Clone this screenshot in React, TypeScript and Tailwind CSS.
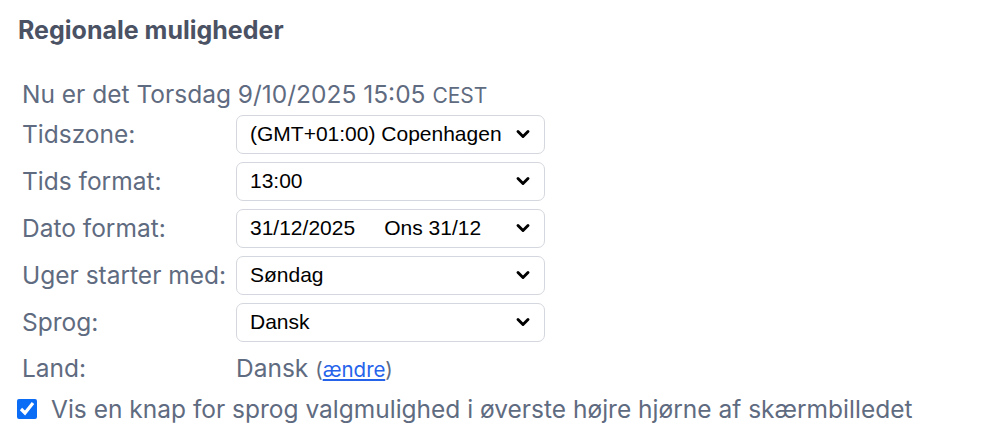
import { ChevronDown } from "lucide-react";

const labelCls = "w-[214px] shrink-0 text-[24.5px] leading-none text-[#5f6b80]";

function Select({ value }: { value: string }) {
  return (
    <div className="relative h-[39px] w-[309px] rounded-[7px] border border-[#d4d7dd] bg-white">
      <div className="flex h-full items-center whitespace-pre pl-[13px] font-['Liberation_Sans',Arial,sans-serif] text-[21px] text-black">
        {value}
      </div>
      <ChevronDown
        className="absolute right-[11px] top-1/2 size-[20px] -translate-y-1/2 text-black"
        strokeWidth={3.5}
      />
    </div>
  );
}

function Row({ label, children }: { label: string; children: React.ReactNode }) {
  return (
    <div className="flex h-[39px] items-center">
      <div className={labelCls}>{label}</div>
      {children}
    </div>
  );
}

export default function App() {
  return (
    <div className="min-h-[448px] bg-white font-['Inter','Noto_Sans',sans-serif]">
      <div className="pl-[18px] pt-[14px]">
        <h2 className="text-[25px] leading-[32px] font-bold text-[#4a5264]">Regionale muligheder</h2>
      </div>
      <div className="flex flex-col gap-2 pl-[22px] pt-[36px]">
        <div className="text-[24.5px] leading-none text-[#5f6b80]">
          Nu er det Torsdag 9/10/2025 15:05 <span className="text-[21px]">CEST</span>
        </div>
        <Row label="Tidszone:">
          <Select value="(GMT+01:00) Copenhagen" />
        </Row>
        <Row label="Tids format:">
          <Select value="13:00" />
        </Row>
        <Row label="Dato format:">
          <Select value={"31/12/2025     Ons 31/12"} />
        </Row>
        <Row label="Uger starter med:">
          <Select value="Søndag" />
        </Row>
        <Row label="Sprog:">
          <Select value="Dansk" />
        </Row>
        <div className="flex items-center pt-[6px]">
          <div className={labelCls}>Land:</div>
          <div className="text-[24.5px] leading-none text-[#5f6b80]">
            Dansk{" "}
            <span className="text-[20.5px]">
              (<a href="#" className="text-[#2563eb] underline">ændre</a>)
            </span>
          </div>
        </div>
      </div>
      <label className="mt-[17px] flex items-center gap-[14px] pl-[17px] text-[24.5px] leading-none text-[#5f6b80]">
        <input type="checkbox" defaultChecked className="size-[20px] accent-[#0b6cf5]" />
        Vis en knap for sprog valgmulighed i øverste højre hjørne af skærmbilledet
      </label>
    </div>
  );
}
